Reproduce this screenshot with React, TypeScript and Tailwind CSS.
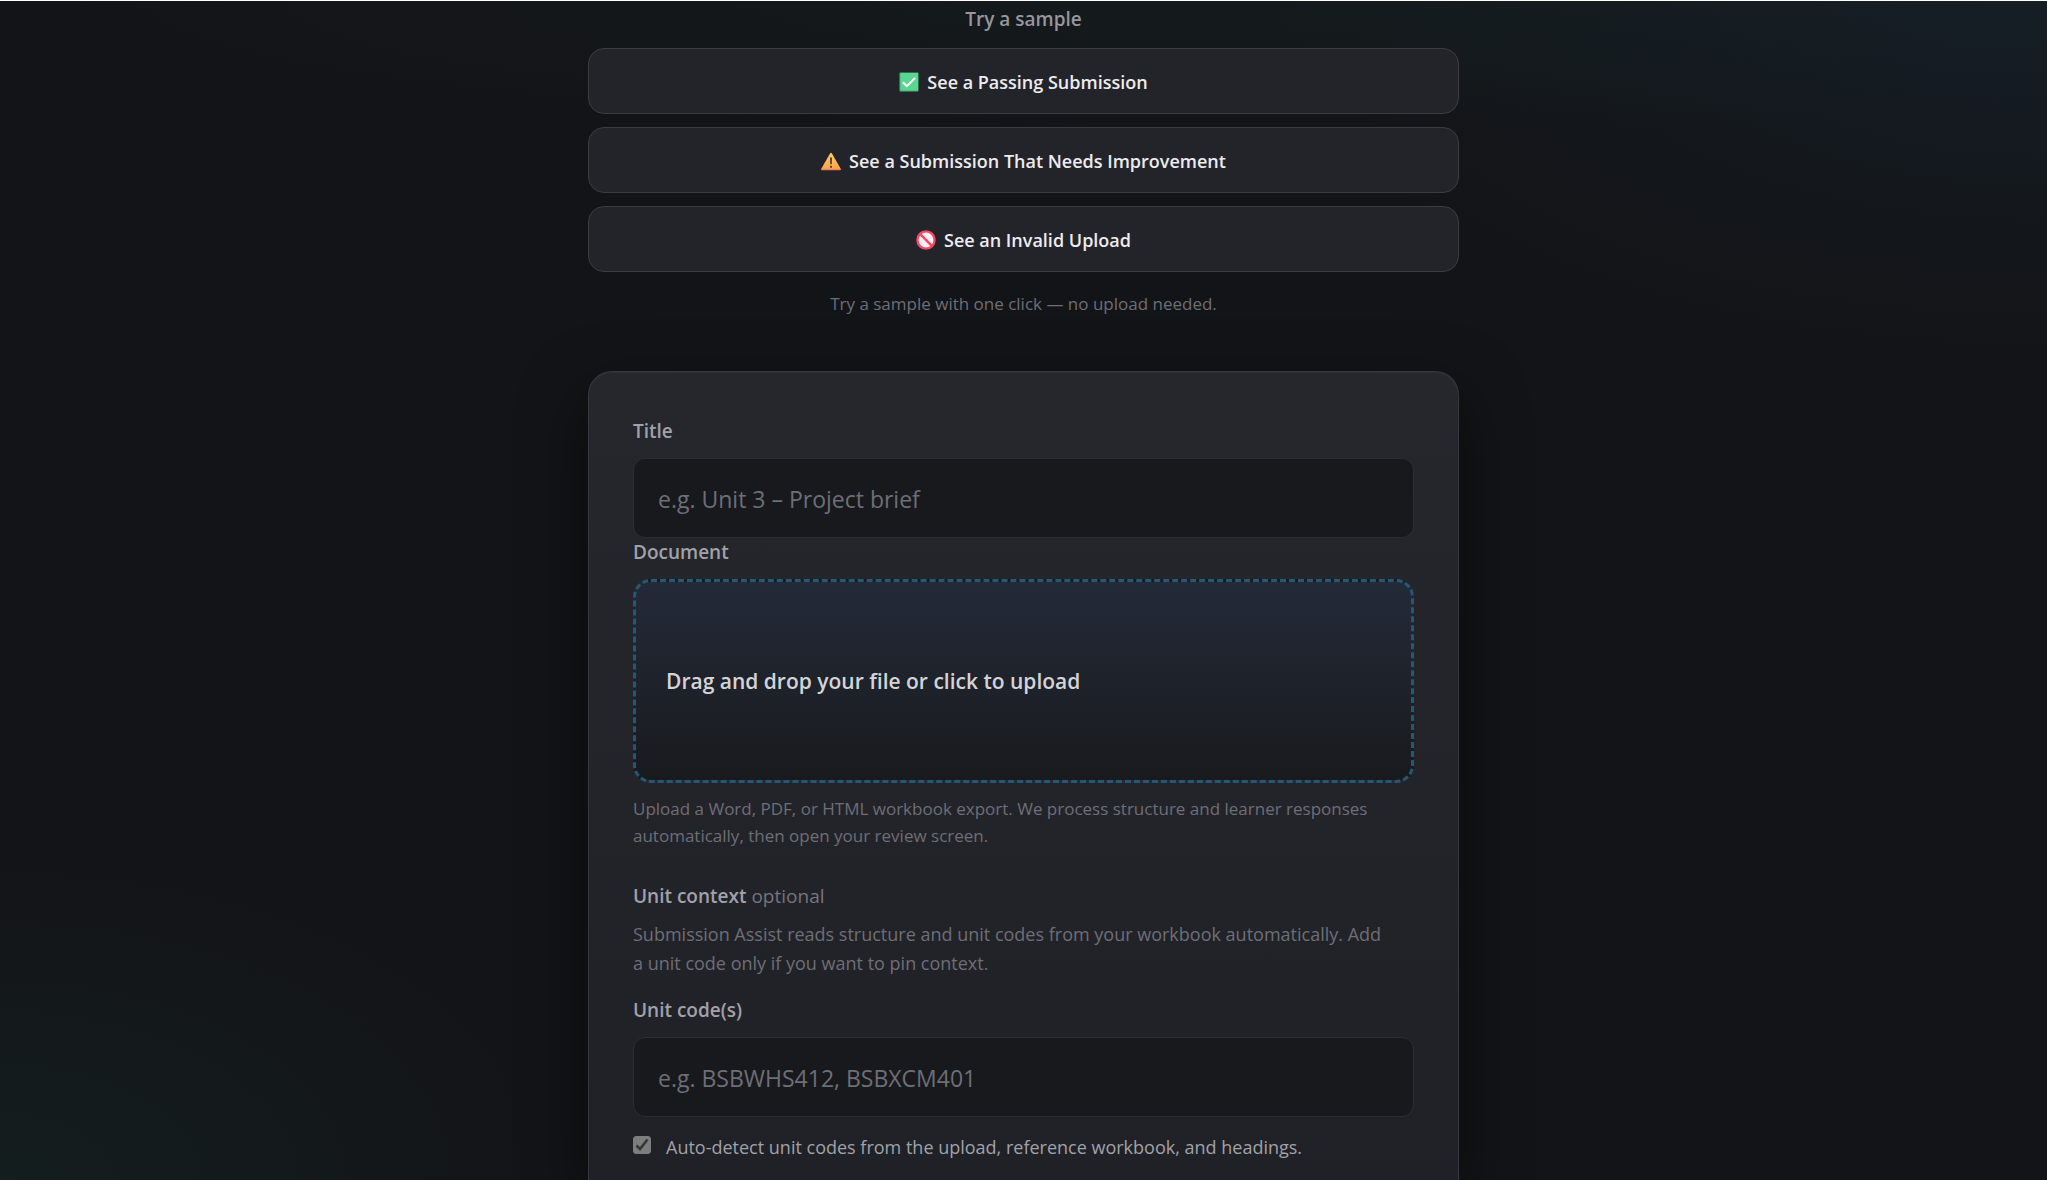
import React from 'react';

interface Sample {
  label: string;
  icon: React.ReactNode;
}

function PassIcon() {
  return (
    <svg viewBox="0 0 20 20" className="size-5" aria-hidden="true">
      <rect x="0.5" y="0.5" width="19" height="19" rx="1" fill="#3fb57b" />
      <rect x="1.5" y="1" width="17.5" height="17.5" rx="0.5" fill="#5ad690" />
      <path d="M3.8 10.2 7.8 14.2 16 6" fill="none" stroke="#fff" strokeWidth="2" />
    </svg>
  );
}

function WarnIcon() {
  return (
    <svg viewBox="0 0 20 20" className="size-5" aria-hidden="true">
      <defs>
        <linearGradient id="warn" x1="0" y1="0" x2="0" y2="1">
          <stop offset="0" stopColor="#ffcf5c" />
          <stop offset="1" stopColor="#ff9f4f" />
        </linearGradient>
      </defs>
      <path d="M9.2 2.2Q10 1.2 10.8 2.2L20 18.2Q20 19 19 19H1Q0 19 0 18.2Z" fill="url(#warn)" />
      <path d="M0.2 18.2H19.8Q19.8 19.2 19 19.2H1Q0.2 19.2 0.2 18.2Z" fill="#e07f45" />
      <path d="M9 6.5H11L10.8 13.2H9.2Z" fill="#4a3f45" />
      <rect x="9" y="14.8" width="2" height="2" rx="0.5" fill="#4a3f45" />
    </svg>
  );
}

function BlockedIcon() {
  return (
    <svg viewBox="0 0 20 20" className="size-5" aria-hidden="true">
      <circle cx="10" cy="10" r="8.6" fill="#f7effa" stroke="#fb4860" strokeWidth="2.4" />
      <path d="M4.2 4.2 15.8 15.8" stroke="#fb4860" strokeWidth="2.4" />
    </svg>
  );
}

const samples: Sample[] = [
  { label: 'See a Passing Submission', icon: <PassIcon /> },
  { label: 'See a Submission That Needs Improvement', icon: <WarnIcon /> },
  { label: 'See an Invalid Upload', icon: <BlockedIcon /> },
];

const labelClass = 'block text-[19px] leading-7 font-semibold text-[#a1a1aa]';
const inputClass =
  'mt-[13px] block h-20 w-full rounded-xl border border-[#2d2e33] bg-[#18191d] px-6 pt-0.5 text-[23px] text-[#d4d4d8] placeholder:text-[#6e6e77] outline-none focus:border-[#2a6480]';

function SampleList() {
  return (
    <section className="text-center">
      <h2 className="text-[19px] leading-7 font-semibold text-[#96969e]">Try a sample</h2>
      <div className="mt-[15px] flex flex-col gap-[13px]">
        {samples.map(sample => (
          <button
            key={sample.label}
            type="button"
            className="flex h-[66px] w-full items-center justify-center gap-2 rounded-2xl border border-[#3b3c41] bg-[#232429] pt-px text-lg font-semibold text-[#ececf0]"
          >
            {sample.icon}
            {sample.label}
          </button>
        ))}
      </div>
      <p className="mt-[18px] text-[17px] leading-[27px] text-[#6e6e77]">
        Try a sample with one click — no upload needed.
      </p>
    </section>
  );
}

function UploadForm() {
  return (
    <form className="mt-[54px] grow rounded-t-3xl border border-b-0 border-[#37383e] bg-linear-to-b from-[#26272c] to-[#202126] px-11 pt-[45px] shadow-[0_24px_64px_rgba(0,0,0,0.5),inset_0_1px_0_rgba(255,255,255,0.04)]">
      <label htmlFor="title" className={labelClass}>
        Title
      </label>
      <input id="title" type="text" placeholder="e.g. Unit 3 – Project brief" className={inputClass} />

      <span className={labelClass}>Document</span>
      <label
        htmlFor="document"
        className="mt-[13px] flex h-[204px] cursor-pointer items-center rounded-[18px] border-3 border-dashed border-[#255874] bg-linear-to-b from-[#232a38] to-[#191a1e] px-[30px] pt-0.5 text-[21px] font-semibold text-[#d4d4d8]"
      >
        Drag and drop your file or click to upload
        <input id="document" type="file" className="sr-only" />
      </label>
      <p className="mt-3 text-[17px] leading-[27px] text-[#6e6e77]">
        Upload a Word, PDF, or HTML workbook export. We process structure and learner responses automatically, then
        open your review screen.
      </p>

      <h3 className="mt-[33px] text-[19px] leading-7 font-semibold text-[#a1a1aa]">
        Unit context <span className="font-normal text-[#75757e]">optional</span>
      </h3>
      <p className="mt-[10px] pr-5 text-lg leading-[29px] text-[#6e6e77]">
        Submission Assist reads structure and unit codes from your workbook automatically. Add a unit code only if you
        want to pin context.
      </p>

      <label htmlFor="codes" className={`mt-[18px] ${labelClass}`}>
        Unit code(s)
      </label>
      <input id="codes" type="text" placeholder="e.g. BSBWHS412, BSBXCM401" className={inputClass} />

      <label className="mt-4 flex items-start gap-[15px] text-lg leading-7 text-[#a1a1aa]">
        <span className="relative mt-[3px] flex">
          <input
            type="checkbox"
            defaultChecked
            className="peer size-[18px] appearance-none rounded-[3px] border border-[#7d7d7d] checked:bg-[#7d7d7d]"
          />
          <svg
            viewBox="0 0 18 18"
            className="pointer-events-none absolute inset-0 hidden size-[18px] peer-checked:block"
            aria-hidden="true"
          >
            <path d="M3.5 9.5 7 13 14.5 3.5" fill="none" stroke="#35363a" strokeWidth="2.6" />
          </svg>
        </span>
        Auto-detect unit codes from the upload, reference workbook, and headings.
      </label>
    </form>
  );
}

export default function App() {
  return (
    <div className="flex min-h-screen flex-col items-center overflow-hidden border-t border-white bg-[#131417] bg-[radial-gradient(ellipse_780px_360px_at_100%_0%,rgba(24,46,62,0.35),transparent),radial-gradient(ellipse_1200px_130px_at_62%_0%,rgba(24,46,44,0.25),transparent),radial-gradient(ellipse_560px_320px_at_0%_100%,rgba(22,52,46,0.3),transparent)] px-6 pt-1 font-['Open_Sans','Noto_Sans',sans-serif]">
      <main className="flex w-full max-w-[871px] grow flex-col">
        <SampleList />
        <UploadForm />
      </main>
    </div>
  );
}
